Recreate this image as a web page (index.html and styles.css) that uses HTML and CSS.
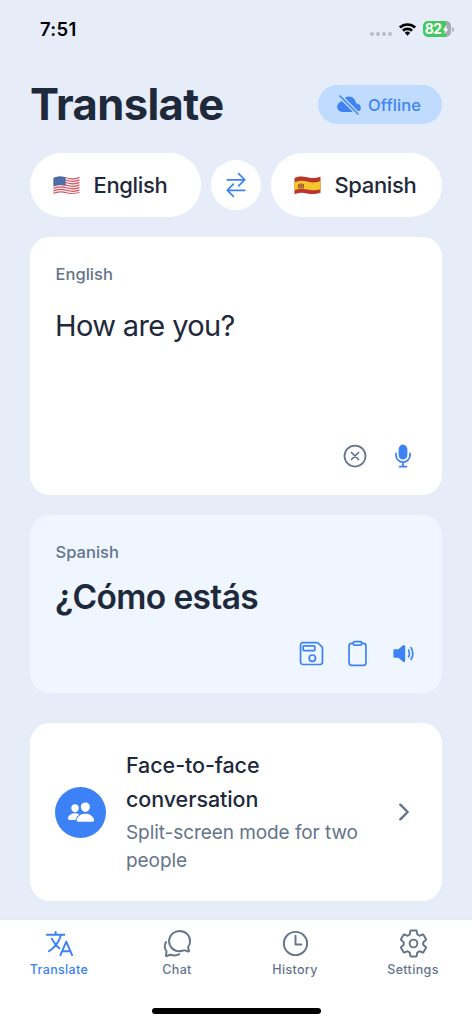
FILE: index.html
```html
<!DOCTYPE html>
<html lang="en">
<head>
<meta charset="utf-8">
<title>Translate</title>
<meta name="viewport" content="width=device-width, initial-scale=1">
<link rel="stylesheet" href="styles.css">
</head>
<body>
<div class="app">
  <header class="status">
    <span class="time">7:51</span>
    <div class="status-icons">
      <span class="dots"><i></i><i></i><i></i><i></i></span>
      <svg class="wifi" viewBox="0 0 20 15"><path d="M.8 4.9a13.4 13.4 0 0 1 18.4 0l-2 2.1a10.4 10.4 0 0 0-14.4 0zM4.1 8.3a8.6 8.6 0 0 1 11.8 0l-2.1 2.1a5.6 5.6 0 0 0-7.6 0zM10 14.6l-2.9-3a4.2 4.2 0 0 1 5.8 0z"/></svg>
      <span class="battery"><b>82</b><svg viewBox="0 0 8 12"><path d="M5.3.5.8 6.8h2.5L2.7 11.5l4.6-6.4H4.7z"/></svg></span>
      <span class="battery-tip"></span>
    </div>
  </header>

  <main class="content">
    <div class="title-row">
      <h1>Translate</h1>
      <div class="offline">
        <svg class="cloud" viewBox="0 0 512 512">
          <mask id="slash"><rect width="512" height="512" fill="#fff"/><path d="M32 32l448 448" stroke="#000" stroke-width="92"/></mask>
          <path mask="url(#slash)" d="M94 183C49 198 4 233 4 294c0 66 56 112 126 112h270c62 0 108-34 108-94 0-60-57-86-102-88-9-90-73-150-150-150-58 0-116 32-162 109z"/>
          <path class="line" d="M448 448L64 64"/>
        </svg>
        <span>Offline</span>
      </div>
    </div>

    <div class="languages">
      <button class="language">
        <svg class="flag" viewBox="0 0 27 19">
          <clipPath id="us"><path d="M.5 2C5 .3 8 .2 13 1.3s9 .8 13.5-.6V16.800c-4.500 1.500-8.500 1.700-13.500.6S5 16.700.5 18.300z"/></clipPath>
          <g clip-path="url(#us)"><path fill="#f3eef0" d="M0 0h27v19H0z"/>
          <path class="stripes" d="M0 2.500Q6.500-.4 13.500 1.800T27 1.400M0 5Q6.500 2.100 13.500 4.300T27 3.900M0 7.500Q6.500 4.600 13.500 6.800T27 6.400M0 10Q6.500 7.100 13.500 9.300T27 8.900M0 12.500Q6.500 9.600 13.500 11.800T27 11.400M0 15Q6.500 12.100 13.500 14.300T27 13.900M0 17.500Q6.500 14.600 13.500 16.800T27 16.400"/>
          <path fill="#4668a5" d="M0 0h12.500v9.700Q6 8.300 0 10.300z"/>
          <path class="stars" d="M2 3.700h10M2 5.800h10M2 7.900h10"/></g>
        </svg>
        <span class="lang-en">English</span>
      </button>
      <button class="swap" aria-label="Swap languages">
        <svg class="icon" viewBox="0 0 512 512"><path d="M304 48l112 112-112 112M398.900 160H96M208 464L96 352l112-112M114 352h302"/></svg>
      </button>
      <button class="language spanish">
        <svg class="flag" viewBox="0 0 27 19">
          <clipPath id="es"><path d="M.5 2C5 .3 8 .2 13 1.300s9 .8 13.500-.6V16.800c-4.500 1.500-8.500 1.700-13.500.6S5 16.700.5 18.300z"/></clipPath>
          <g clip-path="url(#es)"><path fill="#b9352d" d="M0 0h27v19H0z"/><path fill="#f4c52c" d="M0 6.300Q6.500 3.600 13.500 5.600T27 5v8.200q-7 2.100-13.500.4T0 14.300z"/>
          <path fill="#b97836" d="M5 8.300l2-1.300 2 1.300v4l-2 1-2-1z"/><path fill="#8b4c30" d="M4.200 8h.8v4.600h-.8zM9 8h.8v4.600H9zM6 9h2v1H6z"/></g>
        </svg>
        <span class="lang-es">Spanish</span>
      </button>
    </div>

    <section class="card source">
      <p class="label label-en">English</p>
      <p class="source-text">How are you?</p>
      <div class="actions source-actions">
        <svg class="icon gray" viewBox="0 0 512 512"><circle cx="256" cy="256" r="192"/><path d="M320 320L192 192M192 320l128-128"/></svg>
        <svg class="icon" viewBox="0 0 512 512"><path d="M192 448h128M384 208v32c0 70.400-57.600 128-128 128s-128-57.600-128-128v-32M256 368v80"/><path class="solid" d="M256 320a78.830 78.830 0 01-56.550-24.100A80.890 80.890 0 01176 239V128a79.690 79.690 0 0180-80c44.860 0 80 35.140 80 80v111c0 44.660-35.890 81-80 81z"/></svg>
      </div>
    </section>

    <section class="card result">
      <p class="label label-es">Spanish</p>
      <p class="result-text">¿Cómo estás</p>
      <div class="actions result-actions">
        <svg class="icon" viewBox="0 0 512 512"><path d="M380.930 57.370A32 32 0 00358.300 48H94.220A46.210 46.210 0 0048 94.220v323.560A46.210 46.210 0 0094.220 464h323.560A46.360 46.360 0 00464 417.780V153.700a32 32 0 00-9.370-22.630z"/><circle cx="272" cy="344" r="60"/><rect x="96" y="112" width="224" height="88" rx="20"/></svg>
        <svg class="icon" viewBox="0 0 512 512"><path d="M336 64h32a48 48 0 0148 48v320a48 48 0 01-48 48H144a48 48 0 01-48-48V112a48 48 0 0148-48h32"/><rect x="176" y="32" width="160" height="64" rx="26"/></svg>
        <svg class="icon" viewBox="0 0 512 512"><path class="solid" d="M264 416.190a23.920 23.920 0 01-14.210-4.690l-.66-.51-91.460-75H88a24 24 0 01-24-24V200a24 24 0 0124-24h69.650l91.460-75 .66-.51A24 24 0 01288 119.830v272.340a24 24 0 01-24 24z"/><path d="M352 320c10-20 16-41 16-64 0-24-6-43-16-64M400 368c20-34 32-64 32-112 0-49-12-78-32-112"/></svg>
      </div>
    </section>

    <section class="card conversation">
      <div class="avatar"><svg viewBox="0 0 512 512"><path d="M336 256c-20.560 0-40.440-9.180-56-25.840-15.130-16.250-24.370-37.920-26-61-1.740-24.620 5.770-47.260 21.140-63.760S312 80 336 80c23.830 0 45.380 9.060 60.700 25.520 15.470 16.620 23 39.220 21.260 63.630-1.670 23.110-10.900 44.770-26 61C376.440 246.820 356.570 256 336 256zM467.830 432H204.180a27.710 27.710 0 01-22-10.670 30.220 30.220 0 01-5.260-25.790c8.420-33.810 29.280-61.850 60.320-81.080C264.790 297.400 299.860 288 336 288c36.850 0 71 9 98.710 26.050 31.110 19.130 52 47.330 60.380 81.550a30.270 30.270 0 01-5.320 25.780A27.680 27.680 0 01467.830 432zM147 260c-35.190 0-66.130-32.720-69-72.930-1.420-20.600 5-39.650 18-53.620 12.860-13.830 31-21.450 51-21.450s38 7.660 50.930 21.570c13.100 14.080 19.500 33.090 18 53.520-2.870 40.200-33.800 72.910-68.930 72.910zM212.660 291.450c-17.590-8.600-40.420-12.900-65.650-12.900-29.460 0-58.070 7.680-80.570 21.620-25.510 15.830-42.670 38.880-49.600 66.710a27.390 27.390 0 004.790 23.360A25.320 25.320 0 0041.720 400h111a8 8 0 007.870-6.570c.11-.63.25-1.260.41-1.880 8.480-34.060 28.350-62.840 57.710-83.820a8 8 0 00-.63-13.390c-1.570-.92-3.370-1.890-5.420-2.890z"/></svg></div>
      <div class="conversation-copy">
        <h2><span>Face-to-face</span><br>conversation</h2>
        <p>Split-screen mode for two<br>people</p>
      </div>
      <svg class="chevron" viewBox="0 0 512 512"><path d="M184 112l144 144-144 144"/></svg>
    </section>
  </main>

  <footer class="bottom">
    <nav class="tabs">
      <a class="tab active"><svg viewBox="0 0 512 512"><path d="M48 112h288M192 64v48M272 448l96-224 96 224M301.500 384h133M281.300 112S257 206 199 277 80 384 80 384M256 336s-35-27-72-75-56-85-56-85"/></svg><span>Translate</span></a>
      <a class="tab"><svg viewBox="0 0 512 512"><path d="M431 320.600c-1-3.600 1.200-8.600 3.300-12.200a33.680 33.680 0 012.100-3.100A162 162 0 00464 215c.3-92.200-77.500-167-173.700-167-83.900 0-153.900 57.100-170.300 132.900a160.700 160.700 0 00-3.700 34.200c0 92.300 74.800 169.100 171 169.100 15.300 0 35.900-4.600 47.200-7.700s22.500-7.200 25.400-8.300a26.440 26.440 0 019.300-1.700 26 26 0 0110.100 2l56.700 20.100a13.520 13.520 0 003.900 1 8 8 0 008-8 12.850 12.850 0 00-.5-2.700zM66.460 232a146.230 146.230 0 006.390 152.670c2.310 3.490 3.610 6.190 3.210 8s-11.930 61.870-11.930 61.870a8 8 0 002.710 7.680A8.170 8.170 0 0072 464a7.260 7.260 0 002.910-.6l56.210-22a15.700 15.700 0 0112 .2c18.940 7.380 39.880 12 60.830 12A159.210 159.210 0 00284 432.110"/></svg><span>Chat</span></a>
      <a class="tab"><svg viewBox="0 0 512 512"><circle cx="256" cy="256" r="192"/><path d="M256 128v144h96"/></svg><span>History</span></a>
      <a class="tab"><svg viewBox="0 0 512 512"><circle cx="256" cy="256" r="64"/><path d="M416.390 256a154.340 154.340 0 01-1.530 20.790l45.210 35.460a10.810 10.810 0 012.450 13.750l-42.770 74a10.810 10.810 0 01-13.140 4.590l-44.900-18.080a16.110 16.110 0 00-15.170 1.750A164.480 164.480 0 01325 400.800a15.940 15.940 0 00-8.820 12.140l-6.730 47.890a11.080 11.080 0 01-10.680 9.170h-85.540a11.110 11.110 0 01-10.690-8.870l-6.720-47.820a16.070 16.070 0 00-9-12.220 155.300 155.300 0 01-21.460-12.570 16 16 0 00-15.110-1.710l-44.890 18.070a10.810 10.810 0 01-13.140-4.580l-42.770-74a10.800 10.800 0 012.450-13.750l38.210-30a16.050 16.050 0 006-14.080c-.36-4.170-.58-8.330-.58-12.500s.21-8.270.58-12.350a16 16 0 00-6.070-13.940l-38.190-30A10.810 10.810 0 0149.480 186l42.770-74a10.810 10.810 0 0113.140-4.590l44.900 18.080a16.110 16.110 0 0015.170-1.750A164.480 164.480 0 01187 111.200a15.940 15.940 0 008.820-12.140l6.730-47.890A11.080 11.080 0 01213.230 42h85.540a11.110 11.110 0 0110.690 8.870l6.720 47.820a16.070 16.070 0 009 12.220 155.300 155.300 0 0121.460 12.570 16 16 0 0015.110 1.710l44.890-18.070a10.810 10.810 0 0113.140 4.580l42.770 74a10.800 10.800 0 01-2.450 13.750l-38.210 30a16.050 16.050 0 00-6.050 14.080c.33 4.140.55 8.300.55 12.470z"/></svg><span>Settings</span></a>
    </nav>
    <div class="home-indicator"></div>
  </footer>
</div>
</body>
</html>
```
FILE: styles.css
```css
* { box-sizing: border-box; }
body, h1, h2, p { margin: 0; }
body {
  background: #e7edf8;
  color: #1e293b;
  font-family: Inter, "Liberation Sans", sans-serif;
  font-feature-settings: "calt" 0;
}
svg { display: block; flex: none; overflow: visible; }
.app { width: 472px; height: 1024px; display: flex; flex-direction: column; overflow: hidden; }

.status { height: 60px; padding: 0 18px 0 40px; display: flex; justify-content: space-between; align-items: flex-start; color: #000; }
.time { font-size: 18.500px; font-weight: 600; line-height: 24px; padding-top: 17px; letter-spacing: .3px; }
.status-icons { display: flex; align-items: center; height: 18px; margin-top: 20px; }
.dots { display: flex; gap: 2px; padding-top: 9px; margin-right: 6px; }
.dots i { width: 4px; height: 4px; border-radius: 50%; background: #b7bdc9; }
.wifi { width: 19px; height: 14px; margin-right: 6px; }
.battery { width: 28px; height: 16px; border-radius: 5px; background: linear-gradient(90deg, #42c860 82%, #a4aab1 82%); display: flex; align-items: center; justify-content: center; color: #fff; }
.battery b { font-size: 14px; line-height: 16px; font-weight: 700; letter-spacing: -0.7px; }
.battery svg { width: 7px; height: 11px; fill: #fff; margin-left: 1px; }
.battery-tip { width: 2px; height: 5px; border-radius: 0 2px 2px 0; background: #aeb4bf; margin-left: 1px; }

.content { padding: 0 30px; height: 859px; }
.title-row { display: flex; justify-content: space-between; align-items: center; height: 89px; }
h1 { font-size: 43.500px; line-height: 54px; font-weight: 700; letter-spacing: -0.600px; padding-bottom: 1px; }
.offline { width: 124px; height: 39px; border-radius: 20px; background: #bfdbfe; color: #4284f0; display: flex; align-items: center; justify-content: center; gap: 7px; font-size: 16.500px; font-weight: 500; padding-right: 2px; letter-spacing: .05px; }
.cloud { width: 24px; height: 24px; fill: #3f83f3; }
.cloud .line { fill: none; stroke: #3f83f3; stroke-width: 32; stroke-linecap: round; }

.languages { display: flex; align-items: center; gap: 10px; margin-top: 4px; }
button { border: 0; background: #fff; font: inherit; color: inherit; padding: 0; }
.language { width: 171px; height: 64px; border-radius: 32px; display: flex; align-items: center; gap: 13.500px; padding-left: 23px; font-size: 22px; font-weight: 500; letter-spacing: -.35px; }
.flag { width: 27px; height: 19px; }
.stripes { fill: none; stroke: #d65560; stroke-width: 1.200; }
.stars { stroke: #8ba3cb; stroke-width: .6; stroke-dasharray: .7 1; }
.swap { width: 50px; height: 50px; border-radius: 50%; display: flex; align-items: center; justify-content: center; }

.icon { width: 28px; height: 28px; fill: none; stroke: #3c82f5; stroke-width: 32; stroke-linecap: round; stroke-linejoin: round; }
.icon .solid { fill: #3c82f5; stroke: none; }
.icon.gray { stroke: #64748b; }

.card { border-radius: 20px; background: #fff; display: flex; }
.source, .result { flex-direction: column; padding: 25px 25px; }
.source { height: 258px; margin-top: 20px; }
.result { height: 178px; margin-top: 20px; background: #eff6ff; }
.label { font-size: 16.500px; line-height: 24px; font-weight: 500; color: #64748b; padding-left: .6px; }
.source-text { font-size: 29px; line-height: 40px; margin-top: 20px; letter-spacing: -.62px; }
.result-text { font-size: 33.500px; line-height: 42px; font-weight: 600; margin-top: 12px; letter-spacing: -.65px; }
.actions { display: flex; justify-content: flex-end; margin-top: auto; }
.source-actions { gap: 20px; }
.result-actions { gap: 19px; padding-bottom: 1px; }
.result-actions .icon { width: 27px; height: 27px; }

.conversation { height: 178px; margin-top: 30px; padding: 0 25px; align-items: center; }
.avatar { width: 51px; height: 51px; border-radius: 50%; background: #3c82f6; display: flex; align-items: center; justify-content: center; flex: none; }
.avatar svg { width: 28px; height: 28px; fill: #fff; }
.conversation-copy { flex: 1; margin-left: 20px; white-space: nowrap; }
h2 { font-size: 21.500px; line-height: 33.500px; font-weight: 500; letter-spacing: -.08px; }
.conversation-copy p { font-size: 19px; line-height: 28px; color: #64748b; margin-top: 3px; letter-spacing: -.07px; }
.chevron { width: 26px; height: 26px; fill: none; stroke: #64748b; stroke-width: 48; stroke-linecap: round; stroke-linejoin: round; }

.bottom { height: 105px; background: #fff; border-top: 1px solid #e2e8f0; }
.tabs { display: grid; grid-template-columns: repeat(4, 1fr); height: 88px; }
.tab { display: flex; flex-direction: column; align-items: center; padding-top: 8px; color: #64748b; font-size: 12.500px; line-height: 16px; font-weight: 500; letter-spacing: .35px; }
.tab svg { width: 31px; height: 31px; margin-bottom: 3px; fill: none; stroke: currentColor; stroke-width: 32; stroke-linecap: round; stroke-linejoin: round; }
.tab.active { color: #3c82f6; }
.home-indicator { width: 169px; height: 6px; margin: 0 auto; border-radius: 3px; background: #000; }
```
